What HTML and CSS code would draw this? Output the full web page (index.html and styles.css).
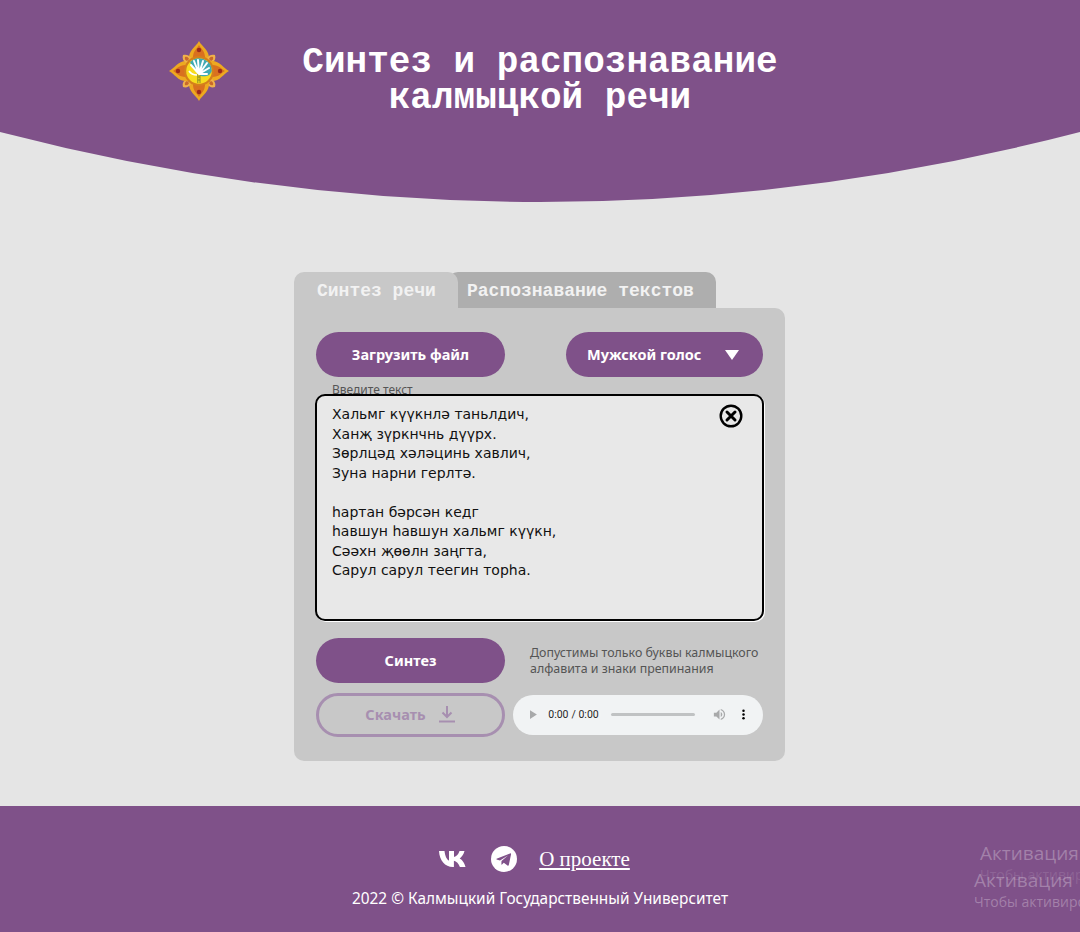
FILE: index.html
```html
<!DOCTYPE html>
<html lang="ru">
<head>
  <meta charset="UTF-8">
  <title>Синтез и распознавание калмыцкой речи</title>
  <link rel="stylesheet" href="styles.css">
</head>
<body>
  <header class="header">
    <div class="header-top">
      <svg class="logo" viewBox="-30 -30 60 60" width="60" height="60">
        <defs>
          <g id="quarter">
            <path d="M0 -30 C3 -24 11 -21 10 -11 L-10 -11 C-11 -21 -3 -24 0 -30Z" fill="#eda920"/>
            <path d="M0 -26 C2 -22 6.500 -20 6 -12 L-6 -12 C-6.500 -20 -2 -22 0 -26Z" fill="#d9701f"/>
            <circle cx="0" cy="-21" r="2.200" fill="#9c2a1c"/>
            <path d="M8 -13 C10 -16 13 -17 16 -16 C17 -13 16 -10 13 -8Z" fill="#f0b24a"/>
            <path d="M10 -12 C11 -14 12 -14.500 14 -14 C14.500 -12 14 -11 12 -10Z" fill="#c8692a"/>
          </g>
        </defs>
        <use href="#quarter"/>
        <use href="#quarter" transform="rotate(90)"/>
        <use href="#quarter" transform="rotate(180)"/>
        <use href="#quarter" transform="rotate(270)"/>
        <!-- medallion -->
        <circle r="15" fill="#d47f1c"/>
        <circle r="12.800" fill="#f7dc1e"/>
        <path d="M-9 -9 A12.800 12.800 0 0 1 12.800 0 C11 5 6 6 2 5 C-2 3 -6 -3 -9 -9Z" fill="#3fa9b4"/>
        <path d="M-1.200 12 L-1.200 3 M1 12 L1 3 M-1.200 9 L1 9 M-1.200 6 L1 6" stroke="#6e7a2a" stroke-width=".8" fill="none"/>
        <path d="M0 3 L-8 -6 M0 3 L-5 -10 M0 3 L-1 -11 M0 3 L4 -10 M0 3 L8 -8 M0 3 L10 -3 M0 3 L8 3" stroke="#fff" stroke-width="2" stroke-linecap="round"/>
        <path d="M-10 0 C-8 3 -5 4 -2 4" stroke="#fff" stroke-width="1.600" fill="none"/>
      </svg>
      <h1 class="title">Синтез и распознавание калмыцкой речи</h1>
    </div>
  </header>
  <svg class="header-curve" viewBox="0 0 1080 70" width="1080" height="70" preserveAspectRatio="none">
    <path d="M0 0 H1080 Q540 140 0 0Z" fill="#7f5189"/>
  </svg>

  <main class="main">
    <div class="card">
      <div class="tabs">
        <div class="tab tab-active">Синтез речи</div>
        <div class="tab">Распознавание текстов</div>
      </div>
      <div class="panel">
        <div class="row row-top">
          <button class="btn" type="button">Загрузить файл</button>
          <button class="btn btn-voice" type="button">Мужской голос <span class="caret"></span></button>
        </div>
        <div class="field">
          <label class="field-label" for="text">Введите текст</label>
          <div class="textbox">
            <textarea class="textarea" id="text" spellcheck="false">Хальмг күүкнлә таньлдич,
Ханҗ зүркнчнь дүүрх.
Зөрлцәд хәләцинь хавлич,
Зуна нарни герлтә.

һартан бәрсән кедг
һавшун һавшун хальмг күүкн,
Сәәхн җөөлн заңгта,
Сарул сарул теегин торһа.</textarea>
            <svg class="clear" viewBox="0 0 24 24" width="24" height="24">
              <circle cx="12" cy="12" r="10.300" fill="none" stroke="#000" stroke-width="2.400"/>
              <path d="M8 8 L16 16 M16 8 L8 16" stroke="#000" stroke-width="3" stroke-linecap="round"/>
            </svg>
          </div>
        </div>
        <div class="row row-synth">
          <button class="btn" type="button">Синтез</button>
          <p class="hint">Допустимы только буквы калмыцкого алфавита и знаки препинания</p>
        </div>
        <div class="row row-result">
          <button class="btn btn-download" type="button">Скачать
            <svg viewBox="0 0 18 18" width="18" height="18">
              <path d="M9 1 V12 M4.500 7.500 L9 12 L13.500 7.500 M1 16.500 H17" fill="none" stroke="#a78fb0" stroke-width="2"/>
            </svg>
          </button>
          <audio class="player" controls></audio>
        </div>
      </div>
    </div>
  </main>

  <footer class="footer">
    <div class="footer-links">
      <svg class="vk" viewBox="0 0 30 18" width="30" height="18">
        <path d="M0 1h5.500c.5 5 2.500 9 4.500 9.500V1h5v6c2.500-.3 4.500-3 5.500-6h5c-.8 3.500-3 6.200-4.800 7.600 2 1 4.300 3.300 5.800 8.400h-5.600c-1.100-3.400-3.500-6-6-6.300V17h-1C6 17 .5 10.500 0 1z" fill="#fff"/>
      </svg>
      <svg viewBox="0 0 26 26" width="26" height="26">
        <circle cx="13" cy="13" r="13" fill="#fff"/>
        <path d="M5.500 12.700 L19 7.400 c.7-.3 1.200.2 1 1 L17.800 19 c-.2.7-.7.9-1.300.5 L12.800 16.800 11 18.500 c-.3.3-.6.2-.6-.3 L10.500 15 17 9.500 9 14.500 5.500 13.500z" fill="#7f5189"/>
      </svg>
      <a class="about" href="#">О проекте</a>
    </div>
    <p class="copyright">2022 © Калмыцкий Государственный Университет</p>
    <div class="watermark watermark-back">Активация<small>Чтобы активировать</small></div>
    <div class="watermark watermark-front">Активация<small>Чтобы активировать</small></div>
  </footer>
</body>
</html>
```

FILE: styles.css
```css
* {
  box-sizing: border-box;
}
html,
body {
  margin: 0;
  height: 932px;
  overflow: hidden;
}
body {
  display: flex;
  flex-direction: column;
  background: #e5e5e5;
  font-family: "Noto Sans", sans-serif;
}

/* header */
.header {
  height: 132px;
  background: #7f5189;
}
.header-top {
  display: flex;
  align-items: flex-start;
  padding: 41px 0 0 169px;
}
.logo {
  flex: none;
}
.title {
  width: 476px;
  margin: 4px 0 0 73px;
  color: #fff;
  font-family: "Liberation Mono", monospace;
  font-size: 36px;
  line-height: 36px;
  font-weight: 700;
  text-align: center;
}
.header-curve {
  display: block;
  flex: none;
}

/* card */
.main {
  flex: 1;
  display: flex;
  justify-content: center;
  padding: 70px 1px 0 0;
}
.card {
  width: 491px;
}
.tabs {
  display: flex;
  height: 36px;
}
.tab {
  position: relative;
  padding: 9px 22px 0 19px;
  margin-left: -10px;
  width: 268px;
  border-radius: 10px 10px 0 0;
  background: #aeaeae;
  color: #f2f2f2;
  font-family: "Liberation Mono", monospace;
  font-size: 18px;
  line-height: 20px;
  font-weight: 700;
  white-space: nowrap;
}
.tab-active {
  z-index: 1;
  width: 164px;
  margin-left: 0;
  padding-left: 23px;
  background: #c8c8c8;
}
.panel {
  height: 453px;
  padding: 24px 22px;
  border-radius: 0 10px 10px 10px;
  background: #c8c8c8;
}
.row {
  display: flex;
}
.row-top {
  justify-content: space-between;
}
.btn {
  flex: none;
  width: 189px;
  height: 45px;
  padding: 0 0 2px;
  border: none;
  border-radius: 23px;
  background: #7f5189;
  color: #fff;
  font-family: "Noto Sans", sans-serif;
  font-size: 14.500px;
  font-weight: 700;
}
.btn-voice {
  width: 197px;
  display: flex;
  align-items: center;
  justify-content: space-between;
  padding: 0 24px 2px 21px;
}
.caret {
  width: 0;
  height: 0;
  margin-top: 2px;
  border-left: 7px solid transparent;
  border-right: 7px solid transparent;
  border-top: 10px solid #fff;
}

/* text box */
.field {
  margin: 6px 0 0 -1px;
  width: 449px;
}
.field-label {
  display: block;
  height: 11px;
  overflow: hidden;
  padding-left: 17px;
  color: #555;
  font-size: 12px;
  line-height: 14px;
}
.textbox {
  position: relative;
  height: 227px;
}
.textarea {
  display: block;
  width: 100%;
  height: 100%;
  padding: 9px 15px;
  border: 2px solid #000;
  border-radius: 10px;
  outline: none;
  resize: none;
  background: #e8e8e8;
  box-shadow: 1px 1px 0 #fff;
  color: #111;
  font-family: "DejaVu Sans", sans-serif;
  font-size: 14px;
  line-height: 19.500px;
  overflow: hidden;
}
.clear {
  position: absolute;
  top: 10px;
  right: 21px;
}
.row-synth {
  margin-top: 17px;
  align-items: center;
}
.hint {
  width: 240px;
  margin: 0 0 0 25px;
  color: #555;
  font-size: 12.400px;
  line-height: 16px;
}
.row-result {
  margin-top: 10px;
  align-items: center;
}
.btn-download {
  display: flex;
  align-items: center;
  justify-content: center;
  gap: 12px;
  height: 44px;
  border: 3px solid #a78fb0;
  background: transparent;
  color: #a78fb0;
}
.player {
  zoom: 0.75;
  width: 333px;
  height: 53px;
  margin-left: 11px;
}

/* footer */
.footer {
  position: relative;
  height: 126px;
  flex: none;
  background: #7f5189;
  color: #fff;
  overflow: hidden;
}
.footer-links {
  display: flex;
  align-items: center;
  justify-content: center;
  gap: 22px;
  padding: 40px 11px 0 0;
}
.about {
  color: #fff;
  font-family: "Liberation Serif", serif;
  font-size: 21px;
  line-height: 26px;
}
.copyright {
  margin: 17px 0 0;
  text-align: center;
  font-size: 15.400px;
  line-height: 20px;
}
.watermark {
  position: absolute;
  color: rgba(255, 255, 255, 0.28);
  font-family: "Open Sans", sans-serif;
  font-size: 19px;
  line-height: 24px;
  white-space: nowrap;
}
.watermark small {
  display: block;
  font-size: 14px;
  line-height: 20px;
}
.watermark-back {
  top: 35px;
  left: 980px;
}
.watermark-back small {
  opacity: 0.4;
}
.watermark-front {
  top: 62px;
  left: 974px;
}
```
